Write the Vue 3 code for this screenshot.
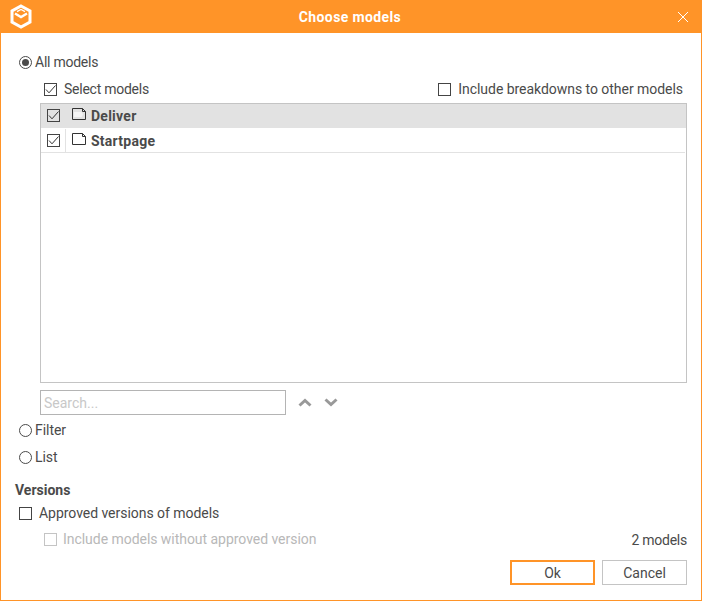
<script setup>
const models = [
  { name: 'Deliver', selected: true, filled: true },
  { name: 'Startpage', selected: false, filled: false }
];
</script>

<template>
<div class="dialog">
  <header class="titlebar">
    <svg class="logo" width="22" height="25" viewBox="0 0 22 25" fill="none" stroke="#fff">
      <path d="M11 2 L20 7 V18 L11 23 L2 18 V7 Z" stroke-width="3" stroke-linejoin="miter" />
      <path d="M5 9.5 L11 13 L17 9.5" stroke-width="2.4" />
      <path d="M7 7.6 L11 5.4 L15 7.6" stroke-width="1.2" />
    </svg>
    <div class="title">Choose models</div>
    <svg class="close" width="12" height="12" viewBox="0 0 12 12" stroke="#fff" fill="none">
      <path d="M1 1 L11 11 M11 1 L1 11" stroke-width="1" />
    </svg>
  </header>

  <main class="content">
    <label class="radio-row first">
      <span class="radio on"></span><span class="tight">All models</span>
    </label>

    <div class="models">
      <div class="models-top">
        <label class="check-row">
          <span class="box">
            <svg width="13" height="13" viewBox="0 0 13 13" fill="none" stroke="#333"><path d="M2 6.5 L5 9.8 L11.5 2.5" /></svg>
          </span>
          <span class="tight">Select models</span>
        </label>
        <label class="check-row">
          <span class="box"></span>
          Include breakdowns to other models
        </label>
      </div>

      <div class="table">
        <div v-for="m in models" :key="m.name" class="row" :class="{ selected: m.selected }">
          <div class="cell-check">
            <span class="box small">
              <svg width="13" height="13" viewBox="0 0 13 13" fill="none" stroke="#333"><path d="M2 6.5 L5 9.8 L11.5 2.5" /></svg>
            </span>
          </div>
          <div class="cell-name">
            <svg width="15" height="13" viewBox="0 0 15 13" fill="none">
              <path v-if="m.filled" d="M2 4 H9.5 L11 6.5 L9.5 9 H2 Z" fill="#f4f4f4" />
              <path d="M0.5 0.5 H10.5 L13.5 3.5 V11.5 H0.5 Z M10.5 0.5 V3.5 H13.5" stroke="#333" />
            </svg>
            <span class="name">{{ m.name }}</span>
          </div>
        </div>
      </div>

      <div class="search-row">
        <input class="search" placeholder="Search..." />
        <svg class="arrow" width="14" height="9" viewBox="0 0 14 9" fill="none" stroke="#999"><path d="M1.5 7.5 L7 2.5 L12.5 7.5" stroke-width="3" /></svg>
        <svg class="arrow" width="14" height="9" viewBox="0 0 14 9" fill="none" stroke="#999"><path d="M1.5 1.5 L7 6.5 L12.5 1.5" stroke-width="3" /></svg>
      </div>
    </div>

    <label class="radio-row filter"><span class="radio"></span>Filter</label>
    <label class="radio-row list"><span class="radio"></span>List</label>

    <h3 class="versions">Versions</h3>
    <label class="check-row approved">
      <span class="box"></span>
      Approved versions of models
    </label>

    <div class="bottom-line">
      <label class="check-row disabled">
        <span class="box"></span>
        Include models without approved version
      </label>
      <span class="count tight">2 models</span>
    </div>

    <div class="buttons">
      <button class="btn primary">Ok</button>
      <button class="btn">Cancel</button>
    </div>
  </main>
</div>
</template>

<style>
html, body {
  margin: 0;
  background: #fff;
}
</style>

<style scoped>
.dialog {
  width: 702px;
  height: 601px;
  box-sizing: border-box;
  border: 1px solid #ff9428;
  border-top: 0;
  font-family: Roboto, "Liberation Sans", sans-serif;
  font-size: 14px;
  letter-spacing: -0.04px;
  color: #4a4a4a;
  background: #fff;
  display: flex;
  flex-direction: column;
}
.tight {
  letter-spacing: -0.25px;
}
.titlebar {
  height: 33px;
  margin: 0 -1px;
  background: #ff9428;
  display: flex;
  align-items: center;
  padding: 0 13px 0 10px;
  flex-shrink: 0;
}
.logo {
  display: block;
}
.title {
  flex: 1;
  text-align: center;
  color: #fff;
  font-weight: 700;
  font-size: 14px;
  letter-spacing: 0.38px;
  padding-right: 9px;
}
.close {
  display: block;
}
.content {
  flex: 1;
  padding: 0 14px;
  display: flex;
  flex-direction: column;
}
.radio-row {
  display: flex;
  align-items: center;
  height: 20px;
  padding-left: 4px;
}
.radio-row.first {
  margin-top: 19px;
}
.radio {
  width: 11px;
  height: 11px;
  border: 1px solid #4a4a4a;
  border-radius: 50%;
  margin-right: 3px;
  position: relative;
  flex-shrink: 0;
}
.radio.on::after {
  content: "";
  position: absolute;
  left: 2px;
  top: 2px;
  width: 7px;
  height: 7px;
  border-radius: 50%;
  background: #4a4a4a;
}
.models {
  margin-left: 25px;
}
.models-top {
  display: flex;
  justify-content: space-between;
  align-items: center;
  height: 20px;
  margin-top: 7px;
  padding: 0 4px;
}
.check-row {
  display: flex;
  align-items: center;
  height: 20px;
}
.box {
  width: 11px;
  height: 11px;
  border: 1px solid #444;
  margin-right: 7px;
  display: flex;
  flex-shrink: 0;
}
.box svg {
  display: block;
  margin: -1px;
}
.table {
  height: 280px;
  box-sizing: border-box;
  margin-top: 4px;
  border: 1px solid #c4c4c4;
}
.row {
  height: 25px;
  padding-top: 1px;
  display: flex;
  box-sizing: border-box;
  border-bottom: 1px solid #e2e2e2;
  margin-right: 1px;
}
.row.selected {
  height: 24px;
  padding-top: 0;
  background: #e2e2e2;
  margin-right: 0;
}
.cell-check {
  width: 25px;
  box-sizing: border-box;
  border-right: 1px solid #e2e2e2;
  display: flex;
  align-items: center;
  padding-left: 6px;
  flex-shrink: 0;
}
.box.small {
  margin-right: 0;
}
.cell-name {
  display: flex;
  align-items: center;
  padding-left: 6px;
}
.cell-name svg {
  display: block;
  margin-top: -2px;
}
.name {
  font-weight: 700;
  margin-left: 4px;
  letter-spacing: 0.25px;
}
.search-row {
  display: flex;
  align-items: center;
  margin-top: 7px;
}
.search {
  width: 246px;
  height: 25px;
  box-sizing: border-box;
  border: 1px solid #b4b4b4;
  padding: 0 3px;
  font: inherit;
  color: #4a4a4a;
  outline: none;
  margin-right: 12px;
}
.search::placeholder {
  color: #c8c8c8;
  opacity: 1;
}
.arrow {
  display: block;
  margin-right: 12px;
}
.radio-row.filter {
  margin-top: 5px;
}
.radio-row.list {
  margin-top: 7px;
}
.versions {
  margin: 13px 0 0;
  font-size: 14px;
  font-weight: 700;
  line-height: 20px;
  letter-spacing: 0;
}
.approved {
  margin-top: 3px;
  padding-left: 4px;
}
.bottom-line {
  display: flex;
  justify-content: space-between;
  align-items: center;
  height: 20px;
  margin-top: 6px;
  padding-left: 29px;
}
.count {
  padding-top: 2px;
}
.disabled {
  color: #b8b8b8;
}
.disabled .box {
  border-color: #c4c4c4;
  margin-right: 6px;
}
.buttons {
  display: flex;
  justify-content: flex-end;
  gap: 7px;
  margin-top: 11px;
}
.btn {
  width: 85px;
  height: 25px;
  box-sizing: border-box;
  border: 1px solid #c4c4c4;
  background: #fff;
  font: inherit;
  color: #4a4a4a;
  padding: 0;
}
.btn.primary {
  border: 2px solid #ff9428;
}
</style>
